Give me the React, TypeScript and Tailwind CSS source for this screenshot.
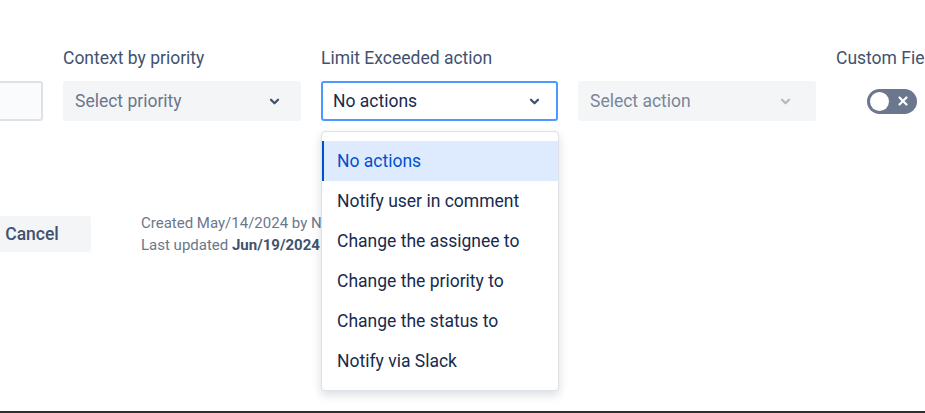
import React from "react"

const font = { fontFamily: "Roboto, 'Noto Sans', sans-serif" }

function Chevron({ muted }: { muted?: boolean }) {
  return (
    <svg width="11" height="7" viewBox="0 0 11 7" className={muted ? "text-[#b3bac5]" : "text-[#42526e]"}>
      <path d="M2 1.8 L5.5 5.2 L9 1.8" fill="none" stroke="currentColor" strokeWidth="2.3" strokeLinecap="round" strokeLinejoin="round" />
    </svg>
  )
}

const options = [
  "No actions",
  "Notify user in comment",
  "Change the assignee to",
  "Change the priority to",
  "Change the status to",
  "Notify via Slack",
]

export default function App() {
  return (
    <div className="h-[413px] w-[925px] overflow-hidden bg-white flex flex-col" style={font}>
      <div className="flex-1 relative">
        <div className="ml-[-195px] pt-[46px]">
          <div className="flex gap-5 items-start">
            <div className="w-[238px] shrink-0">
              <div className="leading-[25px] mb-[10px] text-[17.5px] text-[#42526e]">Limit</div>
              <div className="h-10 rounded-[3px] border-2 border-[#dfe1e6] bg-[#fafbfc]" />
            </div>
            <div className="w-[238px] shrink-0">
              <div className="leading-[25px] mb-[10px] text-[17.5px] text-[#42526e]">Context by priority</div>
              <div className="h-10 rounded-[3px] bg-[#f4f5f7] flex items-center justify-between pl-3 pr-[21px]">
                <span className="text-[17.5px] text-[#6b778c]">Select priority</span>
                <Chevron />
              </div>
            </div>
            <div className="w-[237px] shrink-0 relative">
              <div className="leading-[25px] mb-[10px] text-[17.5px] text-[#42526e]">Limit Exceeded action</div>
              <div className="h-10 rounded-[3px] border-2 border-[#4c9aff] bg-white flex items-center justify-between pl-[10px] pr-[16px]">
                <span className="text-[17.5px] text-[#172b4d]">No actions</span>
                <Chevron />
              </div>
              <div className="absolute left-0 top-full mt-[10px] w-[238px] z-10 bg-white rounded-[4px] border border-[#dfe1e6] shadow-[0_4px_10px_rgba(9,30,66,0.15)] py-[9px]">
                {options.map((o, i) => (
                  <div
                    key={o}
                    className={
                      i === 0
                        ? "h-10 flex items-center pl-[13px] border-l-2 border-[#0052cc] bg-[#deebff] text-[#0052cc] text-[17.5px]"
                        : "h-10 flex items-center pl-[15px] text-[#172b4d] text-[17.5px]"
                    }
                  >
                    {o}
                  </div>
                ))}
              </div>
            </div>
            <div className="w-[238px] shrink-0">
              <div className="leading-[25px] mb-[10px] text-[17.5px] text-[#42526e]">&nbsp;</div>
              <div className="h-10 rounded-[3px] bg-[#f4f5f7] flex items-center justify-between pl-3 pr-[25px]">
                <span className="text-[17.5px] text-[#7a869a]">Select action</span>
                <Chevron muted />
              </div>
            </div>
            <div className="shrink-0 w-[120px]">
              <div className="leading-[25px] mb-[10px] text-[17.5px] text-[#42526e] whitespace-nowrap">Custom Field</div>
              <div className="h-10 flex items-center pl-[31px]">
                <div className="w-[50px] h-[25px] rounded-full bg-[#6b778c] flex items-center justify-between px-[3px]">
                  <div className="w-[19px] h-[19px] rounded-full bg-white" />
                  <svg width="12" height="12" viewBox="0 0 12 12" className="mr-[5px]">
                    <path d="M2.5 2.5 L9.5 9.5 M9.5 2.5 L2.5 9.5" stroke="white" strokeWidth="2.2" strokeLinecap="round" />
                  </svg>
                </div>
              </div>
            </div>
          </div>
          <div className="flex items-center mt-[91px] ml-[168px]">
            <button className="h-9 w-[118px] rounded-[3px] bg-[#f4f5f7] text-[17.5px] font-medium text-[#42526e]">Cancel</button>
            <div className="ml-[50px] text-[15px] leading-[22px] text-[#6b778c]">
              <div>Created May/14/2024 by Nina Admin</div>
              <div>
                Last updated <span className="font-bold text-[#42526e]">Jun/19/2024</span>
              </div>
            </div>
          </div>
        </div>
      </div>
      <div className="h-[2px] bg-[#2f2f2f]" />
    </div>
  )
}
